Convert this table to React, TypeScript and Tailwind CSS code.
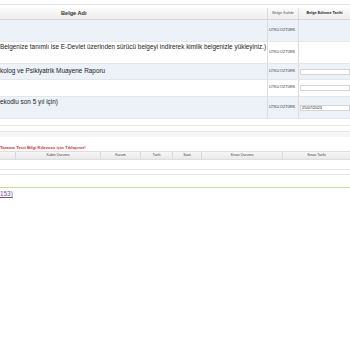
const rows = [
  { h: 'h-[22px]', bg: 'bg-[#edf1f8]', text: '', pad: 'pt-[1px]', input: false, value: '' },
  { h: 'h-[22px]', bg: 'bg-white', text: 'Belgenize tanımlı ise E-Devlet üzerinden sürücü belgeyi indirerek kimlik belgenizle yükleyiniz.)', pad: 'pt-[0px]', input: false, value: '' },
  { h: 'h-[16px]', bg: 'bg-[#edf1f8]', text: 'kolog ve Psikiyatrik Muayene Raporu', pad: 'pt-[2px]', input: true, value: '' },
  { h: 'h-[17px]', bg: 'bg-white', text: '', pad: 'pt-[1px]', input: true, value: '' },
  { h: 'h-[22px]', bg: 'bg-[#edf1f8]', text: 'ekodlu son 5 yıl için)', pad: 'pt-[0px]', input: true, value: '25/07/2023' },
];

const examCols = [
  { w: 'w-[15px]', label: '' },
  { w: 'w-[85px]', label: 'Kabin Durumu' },
  { w: 'w-[40px]', label: 'Kurum' },
  { w: 'w-[32px]', label: 'Tarih' },
  { w: 'w-[29px]', label: 'Saat' },
  { w: 'w-[81px]', label: 'Sınav Durumu' },
  { w: 'flex-1', label: 'Sınav Tarihi' },
];

function DocTable() {
  return (
    <div className="flex flex-col border-t border-[#e2e2e2] pt-[3px]">
      <div className="flex h-[12px] bg-gradient-to-b from-[#fbfbfb] to-[#eeeeee] border-b border-[#d6d6d6]">
        <div className="w-[267px] flex items-center pl-[61px] text-[5.6px] font-bold text-[#333]">Belge Adı</div>
        <div className="w-[31px] flex items-center justify-center border-l border-[#dcdcdc] text-[3.8px] text-[#555]">Belge Sahibi</div>
        <div className="flex-1 flex items-center justify-center border-l border-[#dcdcdc] text-[3.8px] font-bold text-[#222]">Belge Edinme Tarihi</div>
      </div>
      {rows.map((r, i) => (
        <div key={i} className={`flex ${r.h} ${r.bg} border-b border-[#e3e6ea]`}>
          <div className={`w-[267px] whitespace-nowrap text-[6.4px] leading-[9px] text-[#222] ${r.pad}`}>{r.text}</div>
          <div className="w-[31px] flex items-center pl-[1px] border-l border-[#dcdcdc] text-[3.7px] text-[#333] whitespace-nowrap">UTKU ÖZTÜRK</div>
          <div className="flex-1 flex items-center pl-[1px] border-l border-[#dcdcdc]">
            {r.input && (
              <div className="w-full h-[6px] bg-white border border-[#d4d4d4] flex items-center pl-[1px] text-[4px] text-[#222]">{r.value}</div>
            )}
          </div>
        </div>
      ))}
    </div>
  );
}

function ExamTable() {
  return (
    <div className="flex flex-col">
      <div className="text-[4.3px] font-bold text-[#d2322d] whitespace-nowrap h-[6px] leading-[6px]">
        Tarama Testi Bilgi Kılavuzu için Tıklayınız!
      </div>
      <div className="flex h-[9px] bg-gradient-to-b from-[#f7f7f7] to-[#e9e9e9] border-y border-[#dedede]">
        {examCols.map((c, i) => (
          <div key={i} className={`${c.w} flex items-center justify-center text-[3.6px] text-[#444] ${i > 0 ? 'border-l border-[#d8d8d8]' : ''}`}>
            {c.label}
          </div>
        ))}
      </div>
      <div className="h-[10px] border-b border-[#e6e6e6]"></div>
      <div className="h-[5px] border-b border-[#e6e6e6]"></div>
    </div>
  );
}

export default function App() {
  return (
    <div className="w-[350px] h-[350px] overflow-hidden bg-white font-['Liberation_Sans',Arial,sans-serif]">
      <div className="h-[4px]"></div>
      <DocTable />
      <div className="h-[6px]"></div>
      <div className="h-[6px] border-t border-[#e6e6e6]"></div>
      <div className="h-[6px] border-t border-[#e8e8e8] bg-[#f5f5f5]"></div>
      <div className="h-[8px]"></div>
      <ExamTable />
      <div className="h-[12px]"></div>
      <div className="border-t-[1.5px] border-[#c4df9b]"></div>
      <div className="pt-[1px] text-[6.4px] text-[#6a4fa0] underline whitespace-nowrap">153)</div>
    </div>
  );
}
